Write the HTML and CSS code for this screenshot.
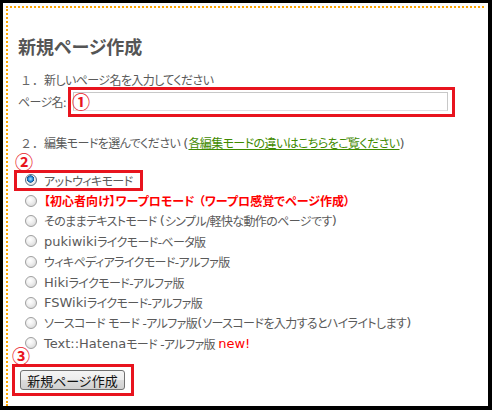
FILE: index.html
```html
<!DOCTYPE html>
<html lang="ja">
<head>
<meta charset="utf-8">
<title>新規ページ作成</title>
<link rel="stylesheet" href="styles.css">
</head>
<body>
<div class="frame">
  <div class="panel">
    <h1 class="title">新規ページ作成</h1>
    <p class="step"><span class="step-no">１．</span>新しいページ名を入力してください</p>
    <div class="name-row">
      <label class="name-label" for="pagename">ページ名:</label>
      <span class="mark mark-input">
        <input class="name-input" id="pagename" type="text">
        <span class="num num-1">①</span>
      </span>
    </div>
    <p class="step step2"><span class="step-no">２．</span>編集モードを選んでください <span class="lat">(</span><a class="help-link" href="#">各編集モードの違いはこちらをご覧ください</a><span class="lat">)</span></p>
    <div class="modes">
      <span class="num num-2">②</span>
      <div class="mode"><label class="mode-label mark mark-mode"><input class="radio" type="radio" name="mode" checked>アットウィキモード</label></div>
      <div class="mode"><label class="mode-label"><input class="radio" type="radio" name="mode"><span class="beginner">【初心者向け】ワープロモード （ワープロ感覚でページ作成）</span></label></div>
      <div class="mode"><label class="mode-label"><input class="radio" type="radio" name="mode">そのままテキストモード <span class="lat">(</span>シンプル/軽快な動作のページです<span class="lat">)</span></label></div>
      <div class="mode"><label class="mode-label"><input class="radio" type="radio" name="mode"><span class="lat">pukiwiki</span>ライクモード-ベータ版</label></div>
      <div class="mode"><label class="mode-label"><input class="radio" type="radio" name="mode">ウィキペディアライクモード-アルファ版</label></div>
      <div class="mode"><label class="mode-label"><input class="radio" type="radio" name="mode"><span class="lat">Hiki</span>ライクモード-アルファ版</label></div>
      <div class="mode"><label class="mode-label"><input class="radio" type="radio" name="mode"><span class="lat">FSWiki</span>ライクモード-アルファ版</label></div>
      <div class="mode"><label class="mode-label"><input class="radio" type="radio" name="mode">ソースコード モード -アルファ版<span class="lat">(</span>ソースコードを入力するとハイライトします<span class="lat">)</span></label></div>
      <div class="mode"><label class="mode-label"><input class="radio" type="radio" name="mode"><span class="lat">Text::Hatena</span>モード -アルファ版&nbsp;<span class="new lat">new!</span></label></div>
    </div>
    <div class="submit-row">
      <span class="num num-3">③</span>
      <span class="mark mark-button"><button class="create-btn" type="button">新規ページ作成</button></span>
    </div>
  </div>
</div>
</body>
</html>
```
FILE: styles.css
```css
html, body {
  margin: 0;
  padding: 0;
  background: #000;
}

body {
  width: 492px;
  height: 410px;
  font-family: "DejaVu Sans", "Noto Sans CJK JP", sans-serif;
  font-size: 12px;
  color: #5a5a5a;
  font-feature-settings: "palt";
}

.frame {
  box-sizing: border-box;
  width: 492px;
  height: 410px;
  border-style: solid;
  border-color: #000;
  border-width: 3px 4px 4px 3px;
  background: #fff;
  padding: 3px 4px 0 3px;
}

.panel {
  box-sizing: border-box;
  height: 100%;
  border-top: 2px dotted #ffa500;
  border-left: 2px dotted #ffa500;
  padding: 0 0 0 10px;
}

.title {
  margin: 28px 0 0;
  font-family: "Noto Sans CJK JP", sans-serif;
  font-size: 18px;
  line-height: 20px;
  font-weight: bold;
  color: #555;
}

.step {
  margin: 17px 0 0 2px;
  line-height: 16px;
  letter-spacing: -0.6px;
  white-space: nowrap;
}

.step-no {
  font-feature-settings: normal;
  letter-spacing: 0;
  color: #666;
}

.step2 {
  margin-top: 25px;
}

.lat {
  letter-spacing: 0;
  font-size: 13px;
}

.help-link {
  color: #3f8a00;
  text-decoration: underline;
}

.name-row {
  display: flex;
  align-items: center;
  margin-top: 2px;
  height: 20px;
  letter-spacing: -0.7px;
}

.name-label {
  width: 55px;
}

.mark {
  position: relative;
  display: inline-flex;
}

.mark::after {
  content: "";
  position: absolute;
  border: 3px solid #e8141e;
  pointer-events: none;
}

.mark-input::after {
  inset: -5px -7px -6px -5px;
}

.name-input {
  box-sizing: border-box;
  width: 375px;
  height: 19px;
  margin: 0;
  border: 1px solid #c8c8c8;
  border-bottom-color: #e0e0e4;
  background: #fff;
  padding: 0 3px;
}

.num {
  position: absolute;
  font-family: "Noto Sans CJK JP", sans-serif;
  font-size: 18px;
  line-height: 16px;
  font-weight: bold;
  color: #e8141e;
  letter-spacing: 0;
  font-feature-settings: normal;
}

.num-1 {
  left: -1px;
  top: 1px;
}

.modes {
  position: relative;
  margin-top: 18px;
}

.num-2 {
  left: -3px;
  top: -17px;
}

.mode {
  height: 20.4px;
  display: flex;
  align-items: center;
}

.mode-label {
  display: inline-flex;
  align-items: center;
  white-space: pre;
  letter-spacing: -0.6px;
}

.mark-mode::after {
  inset: -2px -10px -2px -4px;
}

.radio {
  appearance: none;
  -webkit-appearance: none;
  box-sizing: border-box;
  width: 12px;
  height: 12px;
  margin: 0 7px 0 7px;
  border: 1px solid #a0a0a0;
  border-radius: 50%;
  background: radial-gradient(circle at 40% 35%, #ffffff 0%, #f0f0f0 40%, #cfcfcf 100%);
}

.radio:checked {
  border-color: #5e6e80;
  background:
    radial-gradient(circle at 45% 40%, #a6e0ff 0%, #2a8fd8 28%, #0d4f8f 42%, transparent 48%),
    radial-gradient(circle at 40% 35%, #ffffff 0%, #f0f0f0 50%, #cfcfcf 100%);
}

.beginner {
  color: #ff0000;
  font-weight: bold;
  letter-spacing: 0;
}

.new {
  color: #ff0000;
}

.submit-row {
  position: relative;
  margin-top: 16px;
  padding-left: 2px;
}

.num-3 {
  left: -6px;
  top: -23px;
}

.mark-button::after {
  inset: -6px -9px -6px -8px;
}

.create-btn {
  box-sizing: border-box;
  height: 20px;
  width: 105px;
  margin: 0;
  padding: 0;
  font-family: "DejaVu Sans", "Noto Sans CJK JP", sans-serif;
  font-size: 13px;
  color: #111;
  border: 1px solid #707070;
  border-radius: 3px;
  background: linear-gradient(#f4f4f4 0%, #ececec 50%, #dcdcdc 51%, #d0d0d0 100%);
}
```
